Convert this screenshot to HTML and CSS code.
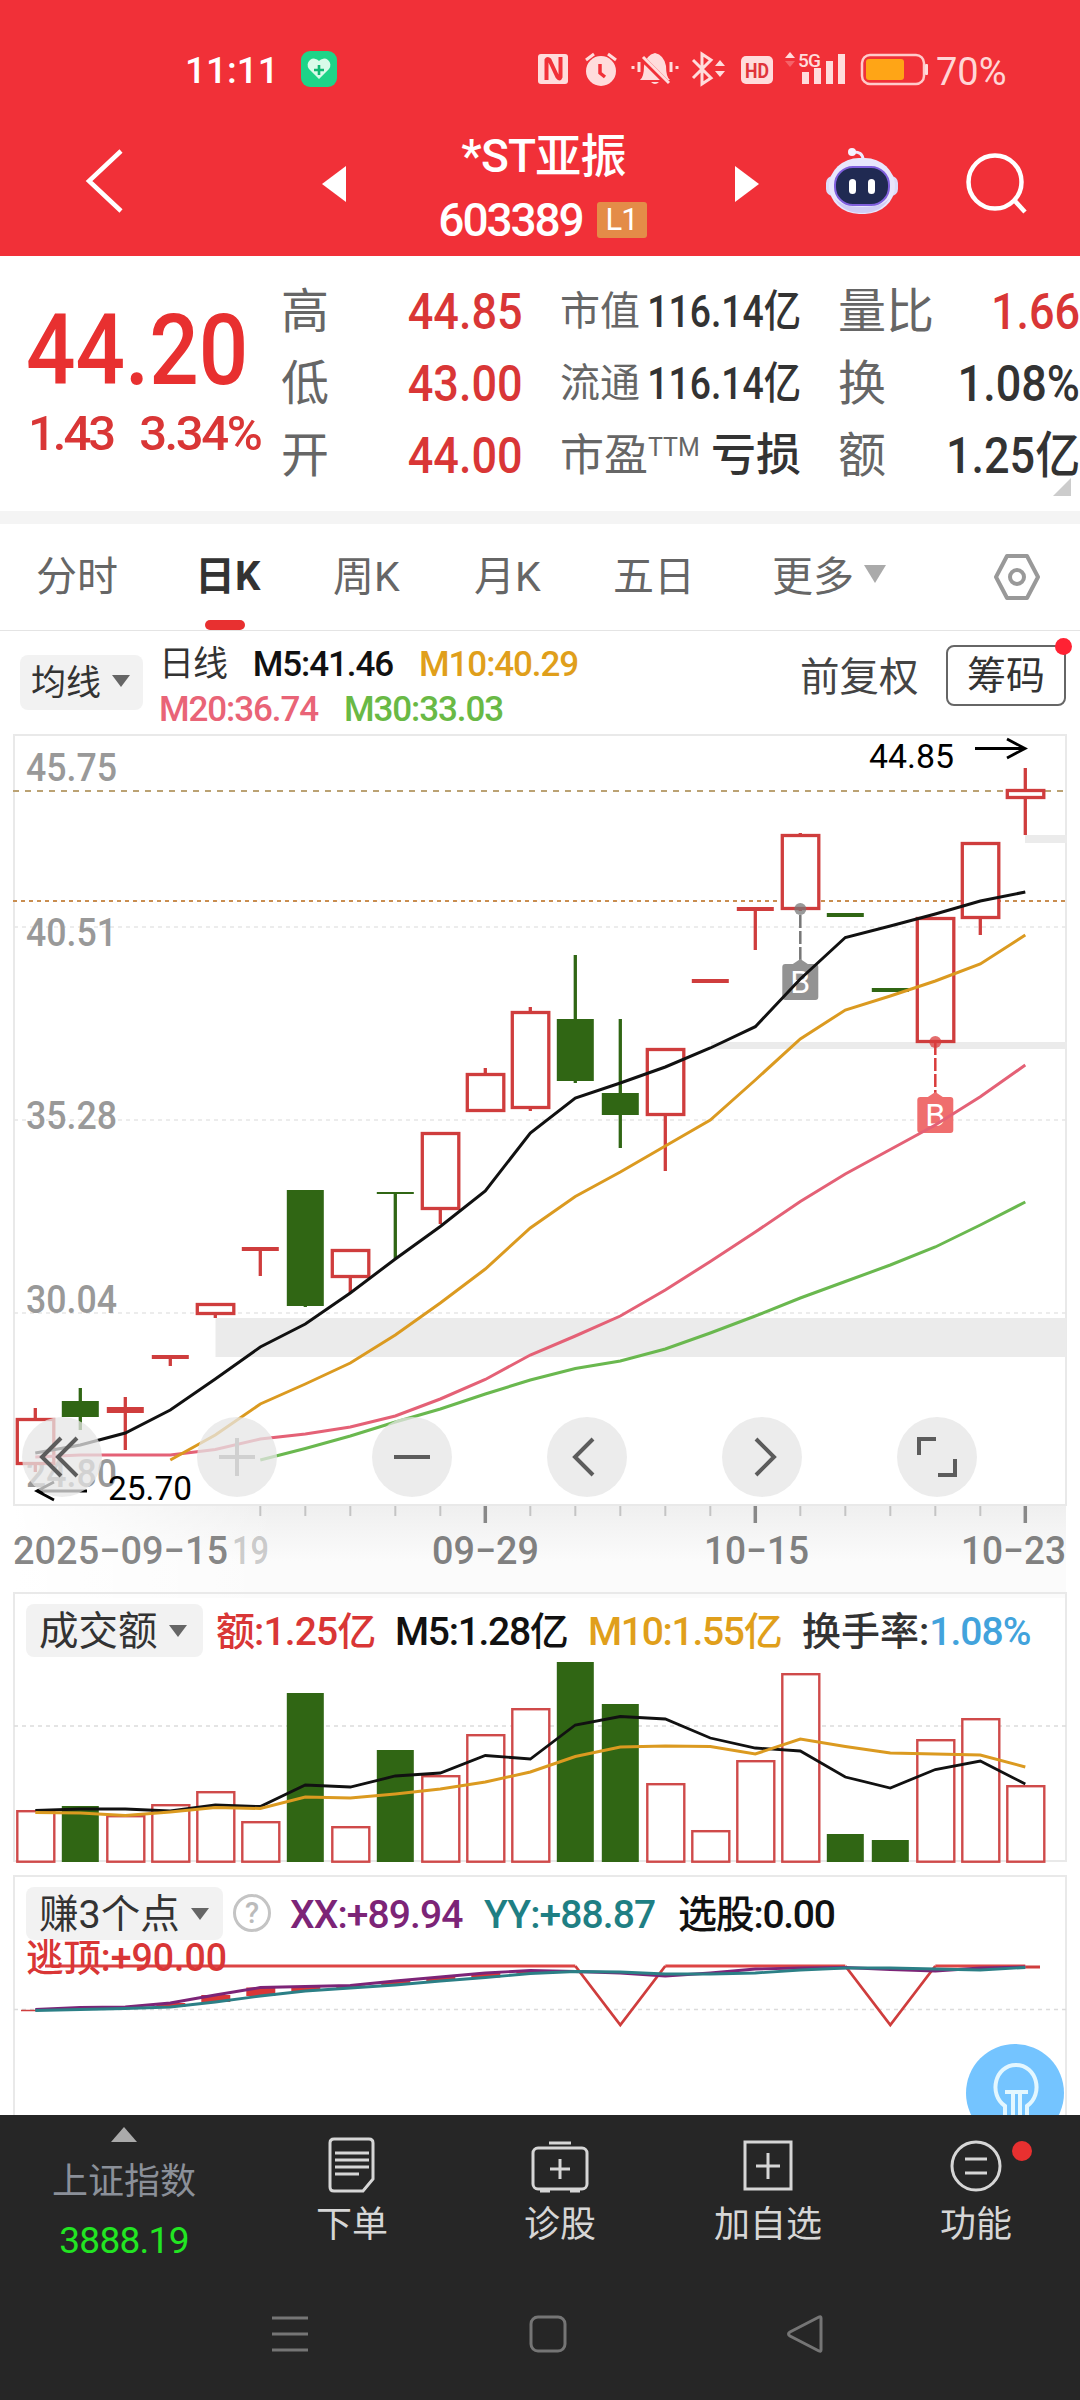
FILE: index.html
```html
<!DOCTYPE html>
<html lang="zh-CN">
<head>
  <meta charset="UTF-8">
  <meta name="viewport" content="width=device-width, initial-scale=1">
  <title>*ST亚振 603389</title>
  <link rel="stylesheet" href="styles.css">
</head>
<body>
  <header class="top">
    <div class="status">
      <span class="clock">11:11</span>
      <svg class="health" width="36" height="36" viewBox="0 0 36 36"><rect width="36" height="36" rx="9" fill="#1ed488"/><path d="M18 28 8 18a6 6 0 0 1 10-8 6 6 0 0 1 10 8z" fill="#d9fbe9"/><path d="M18 14v10M13 19h10" stroke="#10b873" stroke-width="2.6"/></svg>
      <svg class="sysicons" width="412" height="44" viewBox="532 46 412 44" fill="#ffdcdc">
        <rect x="538" y="54" width="30" height="30" rx="3"/>
        <path d="M546.5 80V60q1-2 3 0l8 17q2 3 3 0V57" fill="none" stroke="#f13038" stroke-width="4"/>
        <circle cx="601" cy="71" r="15"/><path d="M586 60l8-6M616 60l-8-6" stroke="#ffdcdc" stroke-width="3"/><path d="M600 64v9l5 4" fill="none" stroke="#f13038" stroke-width="3.5"/>
        <path d="M640 80q4-3 4-14 2-11 11-13 9 2 11 13 0 11 4 14zM651 82h8q-4 4-8 0z"/><path d="M640 56l28 28" stroke="#f13038" stroke-width="6"/><path d="M643 57l26 26M633 66v3M639 62v10M671 62v10M677 66v3" stroke="#ffdcdc" stroke-width="3"/>
        <path d="M693 60l18 18-9 6V54l9 6-18 18" fill="none" stroke="#ffdcdc" stroke-width="3"/><path d="M715 66l5-6 5 6zM715 71l5 6 5-6z"/>
        <rect x="741" y="56" width="32" height="28" rx="5"/><text class="hd" x="745" y="77.5" textLength="24" lengthAdjust="spacingAndGlyphs">HD</text>
        <path d="M785 58l5-6 5 6z"/><path d="M785 61l5 6 5-6z" opacity=".3"/><text class="fiveg" x="798" y="67" textLength="23">5G</text>
        <path d="M802 72h7v12h-7zM814 68h7v16h-7zM826 61h7v23h-7zM838 54h7v30h-7z"/>
        <rect x="862" y="55" width="62" height="29" rx="8" fill="none" stroke="#ffcaca" stroke-width="2.5"/><rect x="866" y="59" width="38" height="21" rx="3" fill="#ffa516"/><rect x="925" y="64" width="3" height="11" rx="1"/>
      </svg>
      <span class="battery">70%</span>
    </div>
    <div class="nav">
      <svg class="back" width="44" height="68" viewBox="0 0 44 68"><path d="M38 3 6 33 38 63" fill="none" stroke="#fff" stroke-width="4.5"/></svg>
      <svg class="prev" width="24" height="36" viewBox="0 0 24 36"><path d="M24 0v36L0 18z" fill="#fff"/></svg>
      <div class="stock">
        <div class="name">*ST亚振</div>
        <div class="code"><span>603389</span><b>L1</b></div>
      </div>
      <svg class="next" width="24" height="36" viewBox="0 0 24 36"><path d="M0 0v36l24-18z" fill="#fff"/></svg>
      <svg class="robot" width="74" height="68" viewBox="0 0 74 68"><path d="M27 5q11-1 11 8" fill="none" stroke="#efeaff" stroke-width="3"/><circle cx="27" cy="5" r="4" fill="#f6f2ff"/><rect x="1" y="29" width="72" height="20" rx="7" fill="#dcdcfa"/><rect x="4" y="11" width="66" height="56" rx="30" fill="#e8e6fc"/><path d="M8 48q8 18 29 18t29-18q-5 12-29 12T8 48z" fill="#cfccf4"/><rect x="10" y="20" width="54" height="38" rx="18" fill="#202a52" stroke="#8060dd" stroke-width="2"/><rect x="24" y="32" width="7" height="15" rx="3.5" fill="#fff"/><rect x="43" y="32" width="7" height="15" rx="3.5" fill="#fff"/></svg>
      <svg class="search" width="62" height="62" viewBox="0 0 62 62" fill="none" stroke="#fff" stroke-width="4.5"><circle cx="29" cy="29" r="26.5"/><path d="M48 47l11 12"/></svg>
    </div>
  </header>

  <section class="quote">
    <div class="price">
      <div class="last">44.20</div>
      <div class="change"><span>1.43</span><span>3.34%</span></div>
    </div>
    <dl class="col c1">
      <dt>高</dt><dd class="up">44.85</dd>
      <dt>低</dt><dd class="up">43.00</dd>
      <dt>开</dt><dd class="up">44.00</dd>
    </dl>
    <dl class="col c2">
      <dt>市值</dt><dd>116.14亿</dd>
      <dt>流通</dt><dd>116.14亿</dd>
      <dt class="wide">市盈<sup>TTM</sup></dt><dd class="loss">亏损</dd>
    </dl>
    <dl class="col c3">
      <dt>量比</dt><dd class="up">1.66</dd>
      <dt>换</dt><dd>1.08%</dd>
      <dt>额</dt><dd>1.25亿</dd>
    </dl>
    <i class="corner"></i>
  </section>

  <nav class="tabs">
    <span>分时</span>
    <span class="active">日K</span>
    <span>周K</span>
    <span>月K</span>
    <span>五日</span>
    <span>更多<i class="caret light"></i></span>
    <svg width="48" height="48" viewBox="0 0 48 48" fill="none" stroke="#999" stroke-width="4"><path d="M14 3h20l11 21-11 21H14L3 24z" stroke-linejoin="round"/><circle cx="24" cy="24" r="7"/></svg>
  </nav>

  <section class="legend">
    <div class="pick">均线<i class="caret"></i></div>
    <div class="mas">
      <div><span class="dark">日线</span><span class="ma5">M5:41.46</span><span class="ma10">M10:40.29</span></div>
      <div><span class="ma20">M20:36.74</span><span class="ma30">M30:33.03</span></div>
    </div>
    <span class="adjust">前复权</span>
    <span class="chips">筹码</span>
  </section>

  <section class="kline">
    <svg id="kline" width="1080" height="858" viewBox="0 734 1080 858"></svg>
    <div class="tools">
      <svg viewBox="0 0 80 80"><path d="M39 21 20 40l19 19M55 21 36 40l19 19"/></svg>
      <svg viewBox="0 0 80 80" class="off"><path d="M22 40h36M40 21v38"/></svg>
      <svg viewBox="0 0 80 80"><path d="M22 40h36"/></svg>
      <svg viewBox="0 0 80 80"><path d="M46 22 28 40l18 18"/></svg>
      <svg viewBox="0 0 80 80"><path d="M34 22l18 18-18 18"/></svg>
      <svg viewBox="0 0 80 80"><path d="M22 38V22h17M58 42v16H41"/></svg>
    </div>
  </section>

  <section class="panel volume">
    <div class="head">
      <div class="pick">成交额<i class="caret"></i></div>
      <span class="up">额:1.25亿</span>
      <span class="ma5">M5:1.28亿</span>
      <span class="ma10">M10:1.55亿</span>
      <span class="dark">换手率:<em>1.08%</em></span>
    </div>
    <svg id="volume" width="1080" height="206" viewBox="0 1658 1080 206"></svg>
  </section>

  <section class="panel signal">
    <div class="head">
      <div class="pick">赚3个点<i class="caret"></i></div>
      <span class="help">?</span>
      <span class="xx">XX:+89.94</span>
      <span class="yy">YY:+88.87</span>
      <span class="ma5">选股:0.00</span>
    </div>
    <svg id="signal" width="1080" height="175" viewBox="0 1940 1080 175"></svg>
    <div class="bulb">
      <svg width="98" height="98" viewBox="0 0 98 98" fill="none" stroke="#e3f7ff" stroke-width="4"><path d="M39 74V62C22 50 29 21 50 21s28 29 11 41v12"/><path d="M39 48h23M47 49v25M54 49v25"/></svg>
    </div>
  </section>

  <footer class="bottom">
    <div class="actions">
      <div class="index">
        <i class="tri"></i>
        <span>上证指数</span>
        <b>3888.19</b>
      </div>
      <div class="action">
        <svg viewBox="0 0 60 60"><path d="M12 4h35q4 0 4 4v36L41 56H12q-4 0-4-4V8q0-4 4-4z"/><path d="M13 18h34M13 25h34M13 32h34M13 39h24"/></svg>
        下单
      </div>
      <div class="action">
        <svg viewBox="0 0 60 60"><rect x="3" y="13" width="54" height="41" rx="5"/><path d="M19 8h22M10 56h10M40 56h10M30 24v20M20 34h20"/></svg>
        诊股
      </div>
      <div class="action">
        <svg viewBox="0 0 60 60"><path d="M7 7h46v47H7zM30 18v26M18 31h24"/></svg>
        加自选
      </div>
      <div class="action">
        <svg viewBox="0 0 60 60"><circle cx="30" cy="31" r="24"/><path d="M19 24h22M19 38h22"/></svg>
        <i class="dot"></i>
        功能
      </div>
    </div>
    <div class="system">
      <svg viewBox="0 0 40 40"><path d="M2 4h36M2 20h36M2 36h36"/></svg>
      <svg viewBox="0 0 40 40"><rect x="3" y="3" width="34" height="34" rx="7"/></svg>
      <svg viewBox="0 0 40 40"><path d="M35 4v32q0 2-2 1L4 22q-3-2 0-4L33 3q2-1 2 1z"/></svg>
    </div>
  </footer>

  <script src="script.js"></script>
</body>
</html>
```
FILE: styles.css
```css
* {
  box-sizing: border-box;
}
body {
  margin: 0;
  width: 1080px;
  height: 2400px;
  overflow: hidden;
  background: #fff;
  color: #333;
  font-family: Roboto, "Noto Sans CJK SC", sans-serif;
}
svg {
  display: block;
  flex: none;
}
.up { color: #d93636; }
.dark { color: #333; }
.ma5 { color: #111; }
.ma10 { color: #e09f1b; }
.ma20 { color: #e96477; }
.ma30 { color: #69b945; }
.xx { color: #7c2477; }
.yy { color: #1f7f84; }

/* header */
.top {
  height: 256px;
  background: #f13038;
  color: #fff;
}
.status {
  height: 115px;
  padding: 46px 0 0 185px;
  display: flex;
}
.clock {
  width: 115px;
  font-size: 37px;
  line-height: 49px;
  font-weight: 500;
  letter-spacing: 0;
}
.health {
  margin: 5px 195px 0 1px;
}
.hd {
  font-size: 20px;
  font-weight: 700;
  fill: #e0343b;
}
.fiveg {
  font-size: 19px;
  font-weight: 500;
}
.battery {
  margin-left: -8px;
  font-size: 38px;
  line-height: 52px;
  color: #ffd6d6;
}
.nav {
  height: 141px;
  display: flex;
}
.back { margin: 33px 0 0 83px; }
.prev { margin: 51px 0 0 195px; }
.stock {
  width: 389px;
  text-align: center;
  font-weight: 500;
}
.name {
  font-size: 46px;
  line-height: 60px;
  padding: 11px 0 0 6px;
  letter-spacing: -.8px;
}
.code {
  display: flex;
  justify-content: center;
  align-items: center;
  height: 50px;
  margin-top: 9px;
  padding-left: 4px;
  font-size: 46px;
  line-height: 50px;
  letter-spacing: -2.1px;
}
.code b {
  width: 50px;
  height: 36px;
  margin-left: 14px;
  border-radius: 3px;
  background: #e48c48;
  font-size: 31px;
  font-weight: 400;
  line-height: 36px;
  letter-spacing: -1px;
}
.next { margin: 51px 0 0; }
.robot { margin: 32px 0 0 66px; }
.search { margin: 38px 0 0 67px; }

/* quote */
.quote {
  position: relative;
  height: 268px;
  border-bottom: 13px solid #f4f4f4;
  padding-top: 20px;
  display: flex;
  font-weight: 500;
}
.price {
  width: 281px;
  padding-left: 26px;
  color: #e83030;
}
.last {
  font-size: 99px;
  line-height: 148px;
  transform: scaleX(.88);
  transform-origin: left;
}
.change {
  display: flex;
  gap: 26px;
  margin-top: -15px;
  padding-left: 2px;
  font-size: 49px;
  line-height: 50px;
  letter-spacing: -3px;
  color: #d93636;
}
.change span:last-child {
  letter-spacing: -2.4px;
}
.col {
  margin: 0;
  display: grid;
  grid-template-rows: 72px 72px 72px;
  line-height: 72px;
}
.col dt {
  font-size: 48px;
  font-weight: 400;
  color: #666;
}
.col dd {
  margin: 0;
  justify-self: end;
  font-size: 50px;
  white-space: nowrap;
  transform: scaleX(.9);
  transform-origin: right;
}
.c1 {
  width: 242px;
  grid-template-columns: 80px 162px;
}
.c2 {
  width: 278px;
  padding-left: 37px;
  grid-template-columns: 80px 161px;
}
.c2 dt { font-size: 40px; }
.c2 dd {
  font-size: 44px;
  transform: scaleX(.85);
}
.c2 .wide {
  font-size: 44px;
  white-space: nowrap;
}
.c2 sup {
  font-size: 25px;
  line-height: 0;
  vertical-align: 15px;
}
.c2 .loss {
  font-size: 45px;
  transform: none;
}
.c3 {
  width: 279px;
  padding-left: 37px;
  grid-template-columns: 100px 142px;
}
.corner {
  position: absolute;
  right: 9px;
  bottom: 15px;
  border-bottom: 18px solid #ccc;
  border-left: 18px solid transparent;
}

/* tabs */
.tabs {
  height: 107px;
  padding-left: 36px;
  border-bottom: 1px solid #e4e4e4;
  display: grid;
  grid-template-columns: 160px 137px 141px 139px 159px 221px 48px;
  align-items: center;
  font-size: 41px;
  line-height: 106px;
  color: #666;
}
.tabs .active {
  position: relative;
  left: -1px;
  color: #333;
  font-weight: 700;
  font-size: 40px;
}
.tabs .active::after {
  content: "";
  position: absolute;
  left: 10px;
  bottom: 0;
  width: 40px;
  height: 10px;
  border-radius: 5px;
  background: #e83030;
}
.caret {
  display: inline-block;
  margin-left: 11px;
  vertical-align: 8px;
  border-top: 12px solid #666;
  border-left: 9px solid transparent;
  border-right: 9px solid transparent;
}
.caret.light {
  margin-left: 10px;
  border-width: 18px 11px 0;
  border-top-color: #aaa;
}

/* legend */
.pick {
  border-radius: 8px;
  background: #f2f2f2;
  color: #333;
  white-space: nowrap;
}
.legend {
  height: 103px;
  display: flex;
  font-size: 35px;
}
.legend .pick {
  width: 123px;
  height: 55px;
  margin: 24px 16px 0 20px;
  padding-left: 11px;
  line-height: 57px;
}
.mas {
  width: 641px;
  padding-top: 11px;
  font-weight: 500;
  letter-spacing: -1.1px;
}
.mas div {
  display: flex;
  gap: 26px;
  height: 45px;
  line-height: 45px;
}
.mas .dark {
  font-weight: 400;
}
.adjust {
  width: 146px;
  font-size: 39.5px;
  line-height: 93px;
  color: #444;
}
.chips {
  position: relative;
  width: 120px;
  height: 61px;
  margin-top: 14px;
  border: 2px solid #666;
  border-radius: 8px;
  text-align: center;
  font-size: 39px;
  line-height: 59px;
}
.chips::after {
  content: "";
  position: absolute;
  top: -9px;
  right: -8px;
  width: 17px;
  height: 17px;
  border-radius: 50%;
  background: #ff2233;
}

/* k line */
.kline {
  position: relative;
  height: 858px;
}
.kline::before {
  content: "";
  position: absolute;
  top: 771px;
  left: 14px;
  width: 1052px;
  height: 93px;
  background: linear-gradient(90deg, #fff, rgba(255, 255, 255, 0) 25%), linear-gradient(#efefef, #fbfbfb 60%);
}
.kline > svg {
  position: relative;
}
.tools {
  position: absolute;
  top: 683px;
  left: 22px;
  display: flex;
  gap: 95px;
}
.tools svg {
  width: 80px;
  height: 80px;
  border-radius: 50%;
  background: rgba(230, 230, 230, .75);
  fill: none;
  stroke: #5c5c5c;
  stroke-width: 4;
}
.tools .off {
  stroke: #d0d0d0;
}
.scale {
  font-size: 39px;
  font-weight: 500;
  fill: #999;
}
.date {
  font-size: 39px;
  font-weight: 500;
  fill: #808080;
}
.extreme {
  font-size: 33px;
  fill: #000;
}
.mark {
  font-size: 32px;
  fill: #fff;
}
.alarm {
  font-size: 38px;
  font-weight: 500;
  fill: #d93636;
}

/* sub charts */
.panel {
  position: relative;
  height: 270px;
}
.panel::before {
  content: "";
  position: absolute;
  inset: 0 13px 0 13px;
  border: 2px solid #e9e9e9;
}
.panel .head {
  position: relative;
  height: 66px;
  padding: 12px 0 0 26px;
  display: flex;
  font-size: 39px;
  font-weight: 500;
  line-height: 56px;
  letter-spacing: -1.3px;
  white-space: nowrap;
}
.panel svg {
  position: relative;
  overflow: visible;
}
.panel .pick {
  height: 53px;
  padding-left: 13px;
  font-weight: 400;
  font-size: 39.5px;
  letter-spacing: 0;
}
.volume .pick {
  width: 177px;
  margin-right: 13px;
}
.volume .up {
  width: 179px;
  letter-spacing: -.9px;
}
.volume .ma5 { width: 193px; }
.volume .ma10 { width: 214px; }
.volume em {
  font-style: normal;
  font-weight: 500;
  letter-spacing: -1px;
  color: #42a3dc;
}
.volume .dark {
  letter-spacing: 0;
}
.signal {
  height: 240px;
  margin-top: 13px;
  overflow: hidden;
}
.signal::before {
  border-bottom: 0;
}
.signal .head {
  height: 65px;
}
.signal .pick {
  width: 197px;
}
.signal .pick .caret {
  margin-left: 11px;
}
.help {
  width: 38px;
  height: 38px;
  margin: 7px 19px 0 10px;
  border: 3px solid #c4c4c4;
  border-radius: 50%;
  color: #bbb;
  font-size: 29px;
  line-height: 33px;
  text-align: center;
  letter-spacing: 0;
}
.signal .xx,
.signal .yy {
  width: 194px;
  letter-spacing: -.9px;
}
.bulb {
  position: absolute;
  left: 966px;
  top: 169px;
  border-radius: 50%;
  background: #74c4ff;
}

/* bottom */
.bottom {
  height: 285px;
  background: #262626;
}
.actions {
  height: 165px;
  display: grid;
  grid-template-columns: 248px repeat(4, 208px);
  color: #d6d6d6;
}
.index {
  display: flex;
  flex-direction: column;
  align-items: center;
  font-size: 36px;
  line-height: 50px;
  color: #8b9099;
}
.index b {
  margin-top: 9px;
  font-size: 37px;
  font-weight: 400;
  letter-spacing: -.7px;
  color: #22e622;
}
.tri {
  margin: 12px 0 15px;
  border-bottom: 15px solid #aaa;
  border-left: 13px solid transparent;
  border-right: 13px solid transparent;
}
.action {
  position: relative;
  text-align: center;
  font-size: 36px;
  line-height: 50px;
}
.action svg {
  width: 60px;
  height: 60px;
  margin: 20px auto 5px;
  fill: none;
  stroke: #d6d6d6;
  stroke-width: 3;
}
.dot {
  position: absolute;
  left: 140px;
  top: 26px;
  width: 20px;
  height: 20px;
  border-radius: 50%;
  background: #e83030;
}
.system {
  display: flex;
  gap: 218px;
  padding: 34px 0 0 270px;
}
.system svg {
  width: 40px;
  height: 40px;
  fill: none;
  stroke: #757575;
  stroke-width: 3;
}
```
FILE: script.js
```js
const RED = '#cf3d3d';
const GREEN = '#306614';
const X0 = 35.3;
const STEP = 45;
const x = i => X0 + STEP * i;

const line = (x1, y1, x2, y2, color, w, extra = '') =>
  `<line x1="${x1}" y1="${y1}" x2="${x2}" y2="${y2}" stroke="${color}" stroke-width="${w}" ${extra}/>`;
const rect = (rx, ry, w, h, fill, extra = '') =>
  `<rect x="${rx}" y="${ry}" width="${w}" height="${h}" fill="${fill}" ${extra}/>`;
const curve = (ys, start, color, w = 3) =>
  `<polyline points="${ys.map((y, i) => x(i + start) + ',' + y).join(' ')}" fill="none" stroke="${color}" stroke-width="${w}"/>`;
const label = (tx, ty, text, cls, len, extra = '') =>
  `<text x="${tx}" y="${ty}" class="${cls}" textLength="${len}" lengthAdjust="spacingAndGlyphs" ${extra}>${text}</text>`;

// type, high, body top, body bottom, low
const candles = [
  ['r', 1408, 1418, 1465, 1472], ['g', 1388, 1401, 1417, 1430], ['f', 1397, 1407, 1413, 1450],
  ['f', 1355, 1355, 1359, 1366], ['r', 1303, 1303, 1315, 1318], ['f', 1247, 1247, 1251, 1276],
  ['g', 1190, 1190, 1306, 1307], ['r', 1249, 1249, 1278, 1293], ['g', 1192, 1192, 1194, 1259],
  ['r', 1132, 1132, 1210, 1224], ['r', 1068, 1073, 1112, 1112], ['r', 1007, 1011, 1109, 1111],
  ['g', 955, 1019, 1081, 1083], ['g', 1019, 1093, 1115, 1148], ['r', 1048, 1048, 1116, 1171],
  ['f', 979, 979, 983, 983], ['f', 907, 907, 911, 950], ['r', 833, 834, 910, 911],
  ['g', 913, 913, 917, 917], ['g', 988, 988, 992, 992], ['r', 917, 917, 1043, 1043],
  ['r', 842, 842, 919, 935], ['r', 768, 789, 799, 835]
];

function drawKline() {
  let s = '';
  s += rect(14, 735, 1052, 770, 'none', 'stroke="#e9e9e9" stroke-width="2"');
  [927, 1120, 1313].forEach(y => s += line(14, y, 1066, y, '#e6e6e6', 1.6, 'stroke-dasharray="4 4"'));
  s += rect(1025, 835, 42, 8, '#ebebeb') + rect(711, 1042, 356, 7, '#ebebeb') + rect(215.5, 1318, 851, 39, '#ebebeb');
  s += line(13, 791, 1066, 791, '#bba273', 2, 'stroke-dasharray="6 6"');
  s += line(13, 901, 1066, 901, '#c98d4f', 2, 'stroke-dasharray="4 4"');

  [[781, '45.75'], [946, '40.51'], [1129, '35.28'], [1313, '30.04'], [1487, '24.80']]
    .forEach(([y, t]) => s += label(26, y, t, 'scale', 91));

  candles.forEach(([type, high, top, bottom, low], i) => {
    const c = type === 'g' ? GREEN : RED;
    if (high < top) s += line(x(i), high, x(i), top, c, 3.3);
    if (low > bottom) s += line(x(i), bottom, x(i), low, c, 3.3);
    if (type === 'r') {
      s += rect(x(i) - 18, top + 1.5, 36.5, bottom - top - 3, '#fff', `stroke="${RED}" stroke-width="3.3"`);
    } else {
      s += rect(x(i) - 18.5, top, 37, bottom - top, c);
    }
  });

  // trade marks
  [[17, 915, 962, '#939393', '#777'], [20, 1042, 1095, '#ef6e6e', '#d93c3c']].forEach(([i, y, t, bg, c]) => {
    s += `<circle cx="${x(i)}" cy="${i === 17 ? 909 : y}" r="6" fill="${c}" fill-opacity=".75"/>`;
    s += line(x(i), y, x(i), t, c, 2.5, 'stroke-dasharray="13 3"');
    s += `<path d="M${x(i) - 9} ${t + 3}l9-6 9 6z" fill="${bg}"/>`;
    s += rect(x(i) - 18, t + 2, 36, 36, bg, 'rx="3"');
    s += `<text x="${x(i)}" y="${t + 31}" class="mark" text-anchor="middle">B</text>`;
  });

  s += curve([1457, 1455, 1455, 1455, 1449.5, 1439, 1434, 1427, 1416, 1399, 1379.5, 1355, 1336, 1316, 1290, 1261.5, 1232, 1201.5, 1174, 1149.5, 1125, 1096.7, 1065], 0, '#e46176');
  s += curve([1460, 1448.5, 1436, 1422, 1409, 1394, 1380, 1368.5, 1361, 1349, 1333, 1316, 1298, 1281.5, 1265, 1247, 1225, 1202], 5, '#6ab84f');
  s += curve([1460, 1435, 1404, 1384, 1363, 1335, 1303, 1269, 1228, 1196.5, 1172, 1146, 1120, 1080, 1039, 1010, 996, 981, 964, 935], 3, '#db9a20');
  s += curve([1453, 1445, 1433, 1410, 1379, 1347, 1324, 1293, 1259, 1226.5, 1191, 1133, 1098, 1083, 1067, 1048, 1026.7, 979, 937.5, 926, 914, 901, 892], 0, '#111');

  s += label(869, 768, '44.85', 'extreme', 85) + label(108, 1500, '25.70', 'extreme', 84);
  s += '<path d="M975 748.5h49M1007 739l18 9.5-18 9.5M87 1491H38M54 1482l-17 9 17 9" fill="none" stroke="#000" stroke-width="2.8"/>';

  for (let i = 5; i < 23; i++) {
    const big = i === 10 || i === 16 || i === 22;
    s += line(x(i), 1506, x(i), big ? 1523 : 1516, big ? '#888' : '#c4c4c4', big ? 3.5 : 2);
  }
  s += label(13, 1564, '2025−09−15', 'date', 215, 'fill-opacity=".95"');
  s += label(232, 1564, '19', 'date', 37, 'fill-opacity=".4"');
  s += label(432, 1564, '09−29', 'date', 107) + label(704, 1564, '10−15', 'date', 105) + label(961, 1564, '10−23', 'date', 105);
  document.getElementById('kline').innerHTML = s;
}

function drawVolume() {
  const tops = [1810, 1806, 1815, 1804, 1791, 1821, 1693, 1826, 1750, 1775, 1734, 1708, 1662, 1704, 1783, 1830, 1760, 1673, 1834, 1840, 1739, 1718, 1785];
  const falls = [1, 6, 8, 12, 13, 18, 19];
  let s = line(14, 1726, 1066, 1726, '#dcdcdc', 1.5, 'stroke-dasharray="4 4"');
  tops.forEach((y, i) => {
    if (falls.includes(i)) s += rect(x(i) - 18.5, y, 37, 1862 - y, GREEN);
    else s += rect(x(i) - 18, y + 1.2, 37, 1860.5 - y, '#fff', 'stroke="#cf4a4a" stroke-width="2.4"');
  });
  s += curve([1810.5, 1809, 1809, 1811, 1805, 1806.5, 1785, 1787, 1776, 1773, 1755.5, 1759, 1725, 1716.5, 1719, 1738, 1748, 1751, 1777, 1788, 1769.5, 1761, 1784], 0, '#111', 2.8);
  s += curve([1812.5, 1813, 1815.5, 1812, 1807.5, 1808.5, 1797, 1798, 1794, 1789, 1782, 1772, 1756.5, 1747, 1746, 1746.5, 1754, 1739, 1746.5, 1753, 1754, 1755, 1767], 0, '#db9a20');
  document.getElementById('volume').innerHTML = s;
}

function drawSignal() {
  const xx = [2009.5, 2007.5, 2007, 2003, 1995, 1987.5, 1986.5, 1985.5, 1981, 1977, 1973, 1970.5, 1971.5, 1973, 1976, 1973, 1969, 1968, 1967.5, 1969.5, 1971, 1968, 1967];
  const yy = [2010.5, 2009.5, 2008.5, 2007, 2002, 1996, 1991, 1988, 1985, 1981, 1977.5, 1973.5, 1971.5, 1972, 1974, 1974, 1973, 1970, 1968, 1968, 1969, 1970, 1967.5];
  let s = line(14, 2009.5, 1066, 2009.5, '#dcdcdc', 1.5, 'stroke-dasharray="4 4"');
  s += line(21, 2010.5, 36, 2010.5, RED, 1.5);
  for (let i = 3; i < 12; i++) s += rect(x(i) - 14, xx[i], 29, yy[i] - xx[i], '#d93636');
  s += `<path d="M45 1966H${x(12)}M${x(14)} 1966H${x(18)}M${x(20)} 1966H${x(22)}" stroke="#d44" stroke-width="3"/>`;
  s += `<path d="M${x(12)} 1966L${x(13)} 2025L${x(14)} 1966M${x(18)} 1966L${x(19)} 2025L${x(20)} 1966M${x(22)} 1967H1040" fill="none" stroke="${RED}" stroke-width="2.8"/>`;
  s += curve(xx, 0, '#7c2477', 2.8) + curve(yy, 0, '#2b7f86', 2.8);
  s += label(26, 1971, '逃顶:+90.00', 'alarm', 201);
  document.getElementById('signal').innerHTML = s;
}

drawKline();
drawVolume();
drawSignal();
```
